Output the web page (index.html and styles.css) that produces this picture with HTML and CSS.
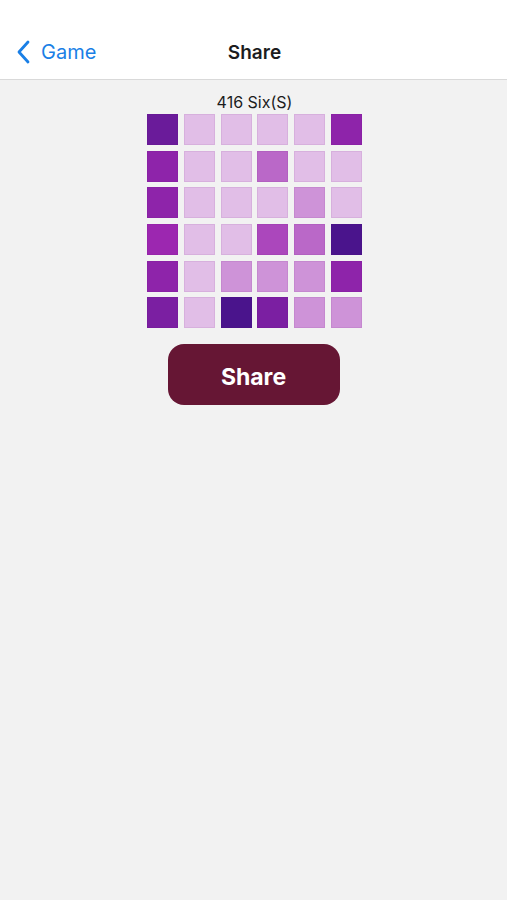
FILE: index.html
```html
<!DOCTYPE html>
<html>
<head>
<meta charset="utf-8">
<link rel="stylesheet" href="styles.css">
</head>
<body>
<header class="nav">
  <a class="back">
    <svg class="chev" width="14" height="24" viewBox="0 0 14 24"><path d="M12 2 L3 12 L12 22" fill="none" stroke="#1a7fe6" stroke-width="2.8" stroke-linecap="round" stroke-linejoin="round"/></svg>
    <span>Game</span>
  </a>
  <div class="title">Share</div>
</header>
<main class="content">
  <div class="label">416 Six(S)</div>
  <div class="grid">
    <div class="c p800"></div><div class="c p100"></div><div class="c p100"></div><div class="c p100"></div><div class="c p100"></div><div class="c p600"></div>
    <div class="c p600"></div><div class="c p100"></div><div class="c p100"></div><div class="c p300"></div><div class="c p100"></div><div class="c p100"></div>
    <div class="c p600"></div><div class="c p100"></div><div class="c p100"></div><div class="c p100"></div><div class="c p200"></div><div class="c p100"></div>
    <div class="c p500"></div><div class="c p100"></div><div class="c p100"></div><div class="c p400"></div><div class="c p300"></div><div class="c p900"></div>
    <div class="c p600"></div><div class="c p100"></div><div class="c p200"></div><div class="c p200"></div><div class="c p200"></div><div class="c p600"></div>
    <div class="c p700"></div><div class="c p100"></div><div class="c p900"></div><div class="c p700"></div><div class="c p200"></div><div class="c p200"></div>
  </div>
  <button class="share">Share</button>
</main>
</body>
</html>
```
FILE: styles.css
```css
html, body {
  margin: 0;
  padding: 0;
}
body {
  background: #f2f2f2;
  font-family: Inter, "Liberation Sans", sans-serif;
  width: 507px;
  height: 900px;
}
.nav {
  height: 79px;
  background: #ffffff;
  border-bottom: 1px solid #d9d9d9;
  position: relative;
  display: flex;
  align-items: flex-end;
  justify-content: center;
  box-sizing: content-box;
}
.back {
  position: absolute;
  left: 16px;
  top: 40px;
  display: flex;
  align-items: center;
  gap: 11px;
  color: #1a7fe6;
  font-size: 20px;
  height: 24px;
}
.chev {
  display: block;
}
.title {
  font-size: 19px;
  font-weight: 600;
  color: #1c1c1e;
  line-height: 24px;
  margin-bottom: 14px;
  margin-left: 2px;
}
.content {
  display: flex;
  flex-direction: column;
  align-items: center;
  padding-top: 11px;
}
.label {
  font-size: 16px;
  color: #1c1c1c;
  line-height: 22px;
  margin-left: 2px;
}
.grid {
  margin-top: 1px;
  display: grid;
  grid-template-columns: repeat(6, 31px);
  grid-auto-rows: 31px;
  gap: 5.7px;
  margin-left: 2px;
}
.c {
  box-sizing: border-box;
  border: 1px solid rgba(80, 0, 100, 0.07);
}
.p100 { background: #e1bee7; }
.p200 { background: #ce93d8; }
.p300 { background: #ba68c8; }
.p400 { background: #ab47bc; }
.p500 { background: #9c27b0; }
.p600 { background: #8e24aa; }
.p700 { background: #7b1fa2; }
.p800 { background: #6a1b9a; }
.p900 { background: #4a148c; }
.share {
  margin-top: 16px;
  width: 172px;
  height: 61px;
  border: none;
  border-radius: 16px;
  background: #661634;
  color: #ffffff;
  font-family: Inter, "Liberation Sans", sans-serif;
  font-size: 23px;
  font-weight: 700;
  padding: 4px 0 0 0;
}
```
